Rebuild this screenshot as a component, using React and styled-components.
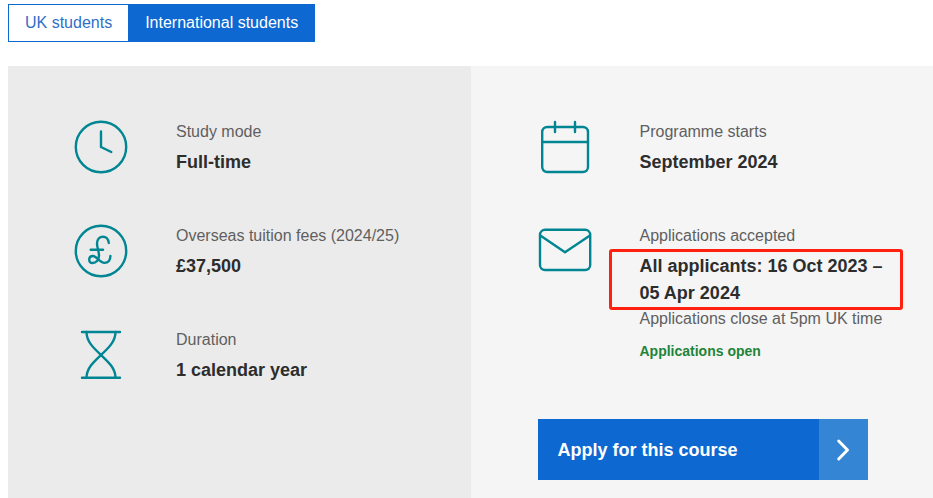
import React, { useState } from 'react';
import styled, { createGlobalStyle } from 'styled-components';

const ClockIcon = () => (
  <Icon viewBox='0 0 54 54' aria-hidden='true'>
    <circle cx='27' cy='27' r='25.2' />
    <path d='M27 11.5V27L37.3 32' />
  </Icon>
);

const PoundIcon = () => (
  <Icon viewBox='0 0 54 54' aria-hidden='true'>
    <circle cx='27' cy='27' r='25.2' />
    <path d='M34.8 19C34.5 15 32 12.7 29 12.7C25.5 12.7 23 15.6 23 19.5C23 24 25 27 25 31.5C25 36 22 39 18.5 39C16.3 39 15.2 37.6 15.2 35.8C15.2 33.6 16.8 32 19 32C23 32 25.5 38.9 30.5 38.9C34.3 38.9 36.4 36 36.4 32' />
    <path d='M16.7 25.7H29' />
  </Icon>
);

const HourglassIcon = () => (
  <Icon viewBox='0 0 54 54' aria-hidden='true'>
    <path d='M8 4H46M8 49.8H46' />
    <path d='M12.5 4C12.5 13.5 19.5 20 27 27C34.5 34 41.5 40.5 41.5 49.8' />
    <path d='M41.5 4C41.5 13.5 34.5 20 27 27C19.5 34 12.5 40.5 12.5 49.8' />
  </Icon>
);

const CalendarIcon = () => (
  <Icon viewBox='0 0 54 54' aria-hidden='true'>
    <rect x='4.2' y='7' width='45.8' height='45' rx='5' />
    <path d='M4.2 22H50M17 2V12M37 2V12' />
  </Icon>
);

const EnvelopeIcon = () => (
  <Icon viewBox='0 0 54 54' aria-hidden='true'>
    <rect x='2' y='5.8' width='50.2' height='40.2' rx='5' />
    <path d='M2.7 11.7L27 28.3L51.6 11.7' />
  </Icon>
);

const Fact = ({ icon, label, children }) => (
  <FactRow>
    {icon}
    <FactText>
      <Label>{label}</Label>
      {children}
    </FactText>
  </FactRow>
);

const App = () => {
  const [tab, setTab] = useState('international');

  return (
    <>
      <GlobalStyle />
      <Page>
        <Tabs role='tablist' aria-label='Student type'>
          <Tab
            role='tab'
            aria-selected={tab === 'uk'}
            $active={tab === 'uk'}
            onClick={() => setTab('uk')}
          >
            UK students
          </Tab>
          <Tab
            role='tab'
            aria-selected={tab === 'international'}
            $active={tab === 'international'}
            onClick={() => setTab('international')}
          >
            International students
          </Tab>
        </Tabs>
        <Panels>
          <Panel>
            <Fact icon={<ClockIcon />} label='Study mode'>
              <Value>Full-time</Value>
            </Fact>
            <Fact icon={<PoundIcon />} label='Overseas tuition fees (2024/25)'>
              <Value>£37,500</Value>
            </Fact>
            <Fact icon={<HourglassIcon />} label='Duration'>
              <Value>1 calendar year</Value>
            </Fact>
          </Panel>
          <Panel $light>
            <Fact icon={<CalendarIcon />} label='Programme starts'>
              <Value>September 2024</Value>
            </Fact>
            <Fact icon={<EnvelopeIcon />} label='Applications accepted'>
              <Value $marked>All applicants: 16 Oct 2023 – 05 Apr 2024</Value>
              <Note>Applications close at 5pm UK time</Note>
              <Status>Applications open</Status>
            </Fact>
            <ApplyLink href='#apply'>
              <span>Apply for this course</span>
              <ApplyArrow>
                <svg viewBox='0 0 14 24' aria-hidden='true'>
                  <path d='M2.7 3L11.5 12L2.7 21' />
                </svg>
              </ApplyArrow>
            </ApplyLink>
          </Panel>
        </Panels>
      </Page>
    </>
  );
};

const GlobalStyle = createGlobalStyle`
  * {
    box-sizing: border-box;
  }

  body {
    margin: 0;
    background-color: #fff;
    color: #2d2d2d;
    font-family: 'Liberation Sans', Arial, sans-serif;
    font-size: 16px;
    line-height: 24px;
  }
`;

const Page = styled.main`
  padding: 4px 0 0 8px;
`;

const Tabs = styled.div`
  display: flex;
  margin-bottom: 24px;
`;

const Tab = styled.button`
  height: 38px;
  padding: 0 16px;
  border: 1px solid #0d68d2;
  background-color: ${(props) => (props.$active ? '#0d68d2' : '#fff')};
  color: ${(props) => (props.$active ? '#fff' : '#2f6fc9')};
  font-family: inherit;
  font-size: 16px;
  cursor: pointer;

  &:first-child {
    border-right: none;
  }
`;

const Panels = styled.div`
  display: grid;
  grid-template-columns: 1fr 1fr;
  @media (max-width: 767px) {
    grid-template-columns: 1fr;
  }
`;

const Panel = styled.section`
  padding: 54px 40px 18px ${(props) => (props.$light ? '67px' : '66px')};
  background-color: ${(props) => (props.$light ? '#f5f5f5' : '#ebebeb')};
`;

const FactRow = styled.div`
  display: flex;
  align-items: flex-start;
  gap: 48px;
  margin-bottom: 48px;
`;

const Icon = styled.svg`
  flex-shrink: 0;
  width: 54px;
  height: 54px;
  fill: none;
  stroke: #008592;
  stroke-width: 2.4;
  stroke-linecap: round;
  stroke-linejoin: round;
`;

const FactText = styled.dl`
  flex-grow: 1;
  margin: 0;
`;

const Label = styled.dt`
  margin-bottom: 5px;
  color: #5f5f5f;
`;

const Value = styled.dd`
  position: relative;
  margin: 0;
  font-size: 18px;
  font-weight: 700;
  line-height: 27px;

  &::after {
    content: ${(props) => (props.$marked ? "''" : 'none')};
    position: absolute;
    inset: -4px -10px -3px -31px;
    border: 3px solid #ff2010;
    border-radius: 3px;
    pointer-events: none;
  }
`;

const Note = styled.dd`
  margin: 0 0 10px;
  color: #5f5f5f;
`;

const Status = styled.dd`
  margin: 0;
  color: #1e8438;
  font-size: 14px;
  font-weight: 700;
  line-height: 21px;
`;

const ApplyLink = styled.a`
  display: flex;
  align-items: center;
  justify-content: space-between;
  max-width: 330px;
  height: 61px;
  margin-top: 57px;
  padding-left: 20px;
  background-color: #0d68d2;
  color: #fff;
  font-size: 18px;
  font-weight: 700;
  text-decoration: none;
`;

const ApplyArrow = styled.span`
  display: flex;
  align-items: center;
  justify-content: center;
  align-self: stretch;
  width: 49px;
  background-color: #3486d4;

  svg {
    width: 14px;
    height: 24px;
    fill: none;
    stroke: #fff;
    stroke-width: 3;
    stroke-linecap: round;
    stroke-linejoin: round;
  }
`;

export default App;
